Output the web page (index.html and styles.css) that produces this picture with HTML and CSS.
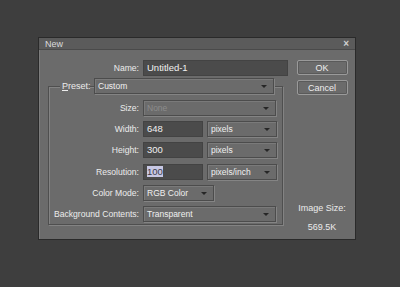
FILE: index.html
```html
<!DOCTYPE html>
<html lang="en">
<head>
    <meta charset="UTF-8">
    <title>New</title>
    <link rel="stylesheet" href="styles.css">
</head>
<body>
    <div class="dialog">
        <div class="titlebar">
            <span class="title">New</span>
            <span class="close">&times;</span>
        </div>

        <div class="dialog-body">
            <div class="form-col">
                <div class="row name-row">
                    <label class="label">Name:</label>
                    <div class="field text-field name-field">Untitled-1</div>
                </div>

                <div class="group">
                    <div class="row preset-row">
                        <label class="legend"><u>P</u>reset:</label>
                        <div class="field select preset-select">Custom</div>
                    </div>

                    <div class="row">
                        <label class="label">Size:</label>
                        <div class="field select wide disabled">None</div>
                    </div>
                    <div class="row">
                        <label class="label">Width:</label>
                        <div class="field text-field num">648</div>
                        <div class="field select unit">pixels</div>
                    </div>
                    <div class="row">
                        <label class="label">Height:</label>
                        <div class="field text-field num">300</div>
                        <div class="field select unit">pixels</div>
                    </div>
                    <div class="row">
                        <label class="label">Resolution:</label>
                        <div class="field text-field num"><span class="sel">100</span></div>
                        <div class="field select unit">pixels/inch</div>
                    </div>
                    <div class="row">
                        <label class="label">Color Mode:</label>
                        <div class="field select mode">RGB Color</div>
                    </div>
                    <div class="row">
                        <label class="label">Background Contents:</label>
                        <div class="field select wide">Transparent</div>
                    </div>
                </div>
            </div>

            <div class="side-col">
                <button class="btn">OK</button>
                <button class="btn">Cancel</button>
                <div class="image-size">
                    <p>Image Size:</p>
                    <p>569.5K</p>
                </div>
            </div>
        </div>
    </div>
</body>
</html>
```

FILE: styles.css
```css
body {
    margin: 0;
    height: 287px;
    background: #3e3e3e;
    font-family: "Liberation Sans", Arial, sans-serif;
    font-size: 9px;
    color: #e6e6e6;
    overflow: hidden;
}

.dialog {
    width: 316px;
    height: 201px;
    margin: 37px 0 0 38px;
    background: #6b6b6b;
    border: 1px solid #2a2a2a;
    box-shadow: inset 1px 1px 0 #7d7d7d;
    display: flex;
    flex-direction: column;
}

/* Title bar */
.titlebar {
    height: 15px;
    background: #5b5b5b;
    border-bottom: 1px solid #4a4a4a;
    display: flex;
    align-items: center;
    justify-content: space-between;
    padding: 0 6px;
}

.title {
    font-size: 9px;
    color: #dcdcdc;
}

.close {
    font-size: 10px;
    font-weight: bold;
    color: #cfcfcf;
}

.dialog-body {
    display: flex;
    padding: 10px 0 0 9px;
    gap: 9px;
}

.form-col {
    display: flex;
    flex-direction: column;
    width: 240px;
}

.row {
    display: flex;
    align-items: center;
    gap: 4px;
    height: 16px;
}

.label {
    width: 90px;
    text-align: right;
    flex-shrink: 0;
    white-space: nowrap;
    font-size: 8.6px;
    color: #ececec;
}

.name-row .label {
    width: 91px;
}

.field {
    height: 14px;
    line-height: 14px;
    padding: 0 3px;
    box-sizing: content-box;
    white-space: nowrap;
    color: #f0f0f0;
}

.text-field {
    background: #4b4b4b;
    border: 1px solid #434343;
    font-size: 9.5px;
}

.name-field {
    width: 138px;
}

.num {
    width: 52px;
}

.sel {
    background: #c8c8e4;
    color: #3a3a4a;
}

.select {
    position: relative;
    background: #6b6b6b;
    border: 1px solid #4c4c4c;
    box-shadow: 1px 1px 0 #848484, inset 1px 1px 0 #7a7a7a;
    font-size: 8.5px;
}

.select::after {
    content: "";
    position: absolute;
    right: 6px;
    top: 6px;
    border-left: 3px solid transparent;
    border-right: 3px solid transparent;
    border-top: 3px solid #262626;
}

.wide {
    width: 125px;
}

.unit {
    width: 62px;
}

.mode {
    width: 63px;
}

.disabled {
    color: #8c8c8c;
}

/* Group box */
.group {
    margin-top: 10px;
    width: 233px;
    height: 137px;
    border: 1px solid #4f4f4f;
    box-shadow: inset 1px 1px 0 #838383, 1px 1px 0 #838383;
    display: flex;
    flex-direction: column;
    gap: 5.3px;
}

.preset-row {
    margin-top: -9px;
    margin-bottom: 0.5px;
}

.legend {
    margin-left: 11px;
    padding: 0 2px;
    width: 26px;
    background: #6b6b6b;
    color: #ececec;
}

.preset-select {
    width: 172px;
    margin-left: 0;
}

/* Right column */
.side-col {
    display: flex;
    flex-direction: column;
    align-items: center;
    width: 50px;
    gap: 5px;
}

.btn {
    width: 51px;
    height: 15px;
    padding: 0;
    background: #6b6b6b;
    border: 1px solid #9a9a9a;
    border-radius: 2px;
    box-shadow: inset 0 0 0 1px #5a5a5a;
    font-family: "Liberation Sans", Arial, sans-serif;
    font-size: 9px;
    color: #eeeeee;
}

.image-size {
    margin-top: 103px;
    text-align: center;
    white-space: nowrap;
}

.image-size p {
    margin: 0 0 9px 0;
    font-size: 9px;
    color: #ececec;
}
```
